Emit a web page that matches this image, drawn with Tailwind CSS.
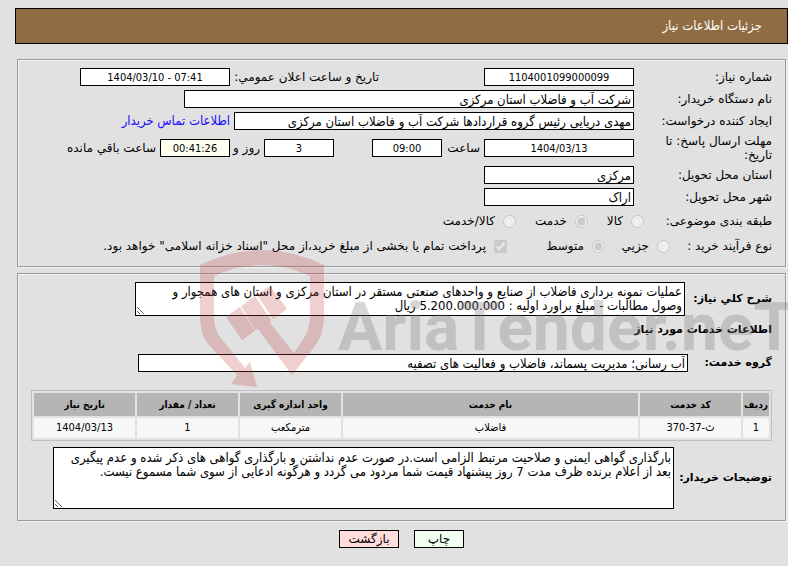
<!DOCTYPE html>
<html lang="fa" dir="rtl">
  <head>
    <meta charset="UTF-8" />
    <meta name="viewport" content="width=device-width, initial-scale=1" />
    <title>جزئیات اطلاعات نیاز</title>
    <script src="https://cdn.jsdelivr.net/npm/@tailwindcss/browser@4"></script>
  </head>
  <body
    class="bg-[#e1e1e1] text-black font-['DejaVu_Sans',sans-serif] text-[12px] leading-[14px] overflow-x-hidden"
  >
    <header class="mt-2 mr-0 ml-[15px] border border-black bg-[#8f6c42] px-[25px] py-[10px]">
      <h1 class="text-white font-['DejaVu_Sans_Condensed',sans-serif] text-[13px]/[14px]">جزئیات اطلاعات نیاز</h1>
    </header>

    <main class="relative mt-[15px] mr-[2px] ml-[17px]">
      <form>
        <fieldset class="border border-[#9a9a9a] shadow-[inset_1px_1px_0_#f4f4f4,1px_1px_0_#f4f4f4] px-[13px] pt-[6px] pb-2">
          <div class="flex items-center h-[22px]">
            <label for="number" class="w-[138px]">شماره نیاز:</label>
            <input id="number" class="w-[150px] h-[18px] border border-black bg-white px-[2px] text-center font-['DejaVu_Sans_Condensed',sans-serif] text-[11px]" value="1104001099000099" readonly />
            <label for="announce" class="w-[250px] pr-[105px] whitespace-nowrap">تاریخ و ساعت اعلان عمومي:</label>
            <input id="announce" dir="ltr" class="mr-1 w-[150px] h-[18px] border border-black bg-white px-[2px] text-center font-['DejaVu_Sans_Condensed',sans-serif] text-[11px]" value="1404/03/10 - 07:41" readonly />
          </div>
          <div class="flex items-center h-[22px]">
            <label for="buyer" class="w-[138px]">نام دستگاه خریدار:</label>
            <input id="buyer" class="w-[450px] h-[18px] border border-black bg-white px-[2px] font-['DejaVu_Sans_Condensed',sans-serif] text-[13px]" value="شرکت آب و فاضلاب استان مرکزی" readonly />
          </div>
          <div class="flex items-center h-[22px]">
            <label for="creator" class="w-[138px]">ایجاد کننده درخواست:</label>
            <input id="creator" class="w-[400px] h-[18px] border border-black bg-white px-[2px] font-['DejaVu_Sans_Condensed',sans-serif] text-[13px]" value="مهدی دریایی رئیس گروه قراردادها شرکت آب و فاضلاب استان مرکزی" readonly />
            <a href="#" class="mr-1 text-[#1a0dff] font-['DejaVu_Sans_Condensed',sans-serif] text-[13px]">اطلاعات تماس خریدار</a>
          </div>
          <div class="flex items-center h-8">
            <label for="deadline" class="w-[138px] pl-6">مهلت ارسال پاسخ: تا تاریخ:</label>
            <input id="deadline" class="w-[150px] h-[18px] border border-black bg-white px-[2px] text-center font-['DejaVu_Sans_Condensed',sans-serif] text-[11px]" value="1404/03/13" readonly />
            <label for="hour" class="w-[42px] px-1">ساعت</label>
            <input id="hour" class="w-[70px] h-[18px] border border-black bg-white px-[2px] text-center font-['DejaVu_Sans_Condensed',sans-serif] text-[11px]" value="09:00" readonly />
            <input id="days" class="mr-[38px] w-[70px] h-[18px] border border-black bg-white px-[2px] text-center font-['DejaVu_Sans_Condensed',sans-serif] text-[11px]" value="3" readonly />
            <label for="days" class="w-[34px] pr-1 whitespace-nowrap">روز و</label>
            <input id="left" class="w-[70px] h-[18px] border border-black bg-[#fffff0] px-[2px] text-center font-['DejaVu_Sans_Condensed',sans-serif] text-[11px]" value="00:41:26" readonly />
            <label for="left" class="mr-1">ساعت باقي مانده</label>
          </div>
          <div class="flex items-center h-[22px]">
            <label for="province" class="w-[138px]">استان محل تحویل:</label>
            <input id="province" class="w-[150px] h-[18px] border border-black bg-white px-[2px] font-['DejaVu_Sans_Condensed',sans-serif] text-[13px]" value="مرکزی" readonly />
          </div>
          <div class="flex items-center h-[22px]">
            <label for="city" class="w-[138px]">شهر محل تحویل:</label>
            <input id="city" class="w-[150px] h-[18px] border border-black bg-white px-[2px] font-['DejaVu_Sans_Condensed',sans-serif] text-[13px]" value="اراک" readonly />
          </div>
          <div class="flex items-center h-[26px]">
            <span class="w-[128px]">طبقه بندی موضوعی:</span>
            <label class="flex items-center gap-2 w-[56px]"><input type="radio" name="subject" class="size-[13px]" disabled />کالا</label>
            <label class="flex items-center gap-2 w-[72px]"><input type="radio" name="subject" class="size-[13px]" checked disabled />خدمت</label>
            <label class="flex items-center gap-2"><input type="radio" name="subject" class="size-[13px]" disabled />کالا/خدمت</label>
          </div>
          <div class="flex items-center h-6">
            <span class="w-[102px]">نوع فرآیند خرید :</span>
            <label class="flex items-center gap-2 w-[65px]"><input type="radio" name="process" class="size-[13px]" disabled />جزیي</label>
            <label class="flex items-center gap-2 w-[98px]"><input type="radio" name="process" class="size-[13px]" checked disabled />متوسط</label>
            <label class="flex items-center gap-2 whitespace-nowrap"><input type="checkbox" class="size-[13px]" checked disabled />پرداخت تمام یا بخشی از مبلغ خرید،از محل "اسناد خزانه اسلامی" خواهد بود.</label>
          </div>
        </fieldset>

        <fieldset class="mt-[6px] border border-[#9a9a9a] shadow-[inset_1px_1px_0_#f4f4f4,1px_1px_0_#f4f4f4] px-[13px] pt-2 pb-[11px]">
          <div class="flex items-center">
            <label for="summary" class="w-[87px] font-bold text-[11px]">شرح کلي نیاز:</label>
            <textarea id="summary" class="w-[550px] h-[34px] border border-black bg-white px-[2px] py-[2px] font-['DejaVu_Sans_Condensed',sans-serif] text-[13px]/[14px] overflow-hidden resize" readonly>عملیات نمونه برداری فاضلاب از صنایع و واحدهای صنعتی مستقر در استان مرکزی و استان های همجوار و
وصول مطالبات - مبلغ براورد اولیه : 5.200.000.000 ریال</textarea>
          </div>
          <h2 class="mt-[7px] font-bold text-[11px]/[14px]">اطلاعات خدمات مورد نیاز</h2>
          <div class="flex items-center mt-[17px]">
            <label for="group" class="w-[84px] font-bold text-[11px]">گروه خدمت:</label>
            <input id="group" class="w-[550px] h-[18px] border border-black bg-white px-[2px] font-['DejaVu_Sans_Condensed',sans-serif] text-[13px]" value="آب رسانی؛ مدیریت پسماند، فاضلاب و فعالیت های تصفیه" readonly />
          </div>
          <table class="mt-[18px] w-full table-fixed border border-[#c0c0c0] border-separate border-spacing-[2px] text-center font-['DejaVu_Sans_Condensed',sans-serif] leading-[14px]">
            <thead class="text-[10px]">
              <tr class="h-[23px] bg-[#b5b5b5]">
                <th class="w-[26px]">ردیف</th>
                <th class="w-[101px]">کد خدمت</th>
                <th>نام خدمت</th>
                <th class="w-[101px]">واحد اندازه گیری</th>
                <th class="w-[101px]">تعداد / مقدار</th>
                <th class="w-[101px]">تاریخ نیاز</th>
              </tr>
            </thead>
            <tbody class="text-[11px]">
              <tr class="h-5 bg-[#f7f7f7]">
                <td>1</td>
                <td>ث-37-370</td>
                <td>فاضلاب</td>
                <td>مترمکعب</td>
                <td>1</td>
                <td>1404/03/13</td>
              </tr>
            </tbody>
          </table>
          <div class="flex items-center mt-[6px]">
            <label for="notes" class="w-[98px] font-bold text-[11px] whitespace-nowrap">توضیحات خریدار:</label>
            <textarea id="notes" class="w-[621px] h-[62px] border border-black bg-white px-[2px] py-[3px] font-['DejaVu_Sans_Condensed',sans-serif] text-[13px]/[14px] overflow-hidden resize" readonly>بارگذاری گواهی ایمنی و صلاحیت مرتبط الزامی است.در صورت عدم نداشتن و بارگذاری گواهی های ذکر شده و عدم پیگیری
بعد از اعلام برنده ظرف مدت 7 روز پیشنهاد قیمت شما مردود می گردد و هرگونه ادعایی از سوی شما مسموع نیست.</textarea>
          </div>
        </fieldset>

        <div class="mt-[9px] flex justify-center gap-[15px]">
          <button type="button" class="w-[50px] h-[18px] border border-black bg-[#f0fff0]">چاپ</button>
          <button type="button" class="w-[60px] h-[18px] border border-black bg-[#ffdddd]">بازگشت</button>
        </div>
      </form>

      <!-- watermark -->
      <svg class="absolute top-[190px] left-[183px] w-[588px] h-[140px] pointer-events-none" viewBox="0 0 588 140" aria-hidden="true" direction="ltr">
        <g fill="#c0363c" fill-opacity=".24">
          <path d="M0 16Q62 -14 124 16V69Q124 84 115 97L92 126L58 80L55 81L41 57L55 47L71 71L70 74L94 104L104 89Q110 80 110 66V27Q62 5 14 27V68Q14 80 20 88L45 119L50 113L57 138L31 135L37 126L8 95Q0 84 0 69Z" />
          <path d="M26 68L40 58L55 82L42 91ZM57 46L70 37L87 60L73 70Z" />
        </g>
        <text x="138" y="101" class="font-[Roboto,sans-serif] font-bold text-[66px]" fill="#777" fill-opacity=".3">AriaTender.neT</text>
      </svg>
    </main>
  </body>
</html>
